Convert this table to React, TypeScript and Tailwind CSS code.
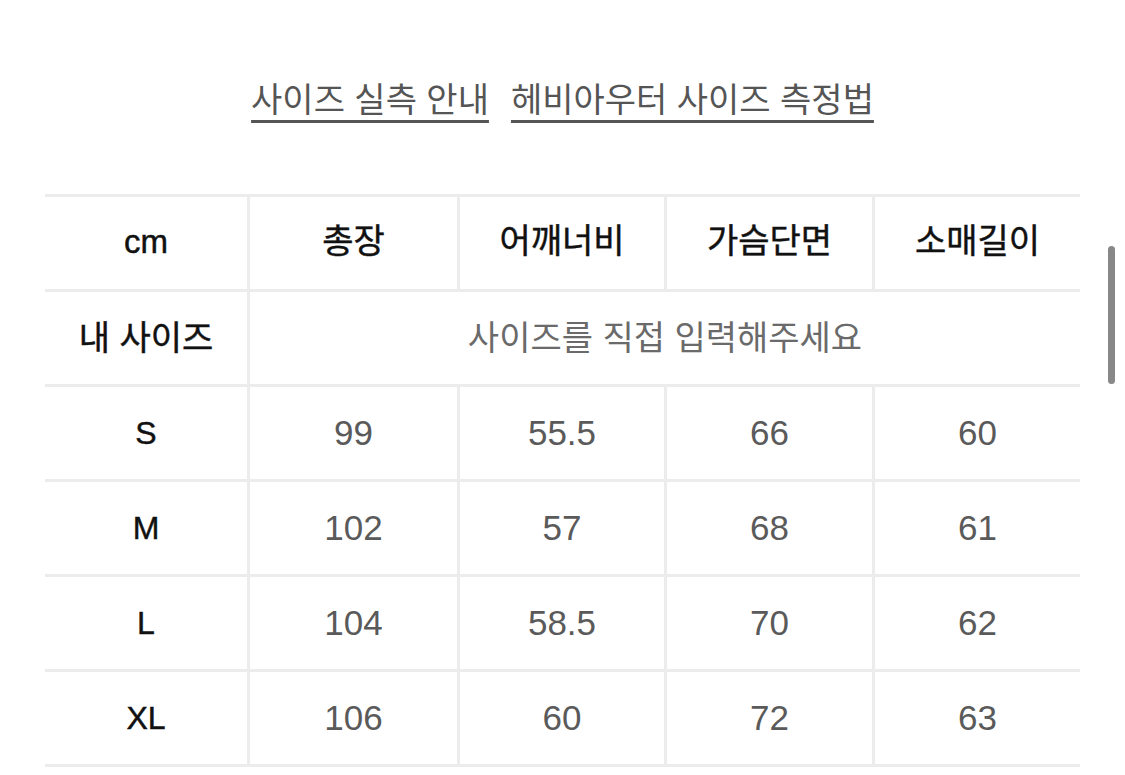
import React from "react";

const font = { fontFamily: '"Liberation Sans", "Noto Sans CJK KR", sans-serif' };

const headers = ["총장", "어깨너비", "가슴단면", "소매길이"];
const rows: [string, string[]][] = [
  ["S", ["99", "55.5", "66", "60"]],
  ["M", ["102", "57", "68", "61"]],
  ["L", ["104", "58.5", "70", "62"]],
  ["XL", ["106", "60", "72", "63"]],
];

function Cell({ children, first, className = "" }: { children: React.ReactNode; first?: boolean; className?: string }) {
  return (
    <div
      className={`h-[95px] flex items-center justify-center border-b-[3px] border-[#ececec] ${first ? "" : "border-l-[3px]"} ${className}`}
    >
      {children}
    </div>
  );
}

const head = "font-normal text-[#111] [-webkit-text-stroke:0.45px_#111]";

export default function App() {
  return (
    <div className="w-[1125px] h-[775px] bg-white overflow-hidden relative" style={font}>
      <div className="flex justify-center gap-[22px] pt-[80px] h-[194px]">
        <span className="text-[34px] leading-[40px] text-[#555] underline decoration-[3px] underline-offset-[8px] decoration-[#555]">
          사이즈 실측 안내
        </span>
        <span className="text-[34px] leading-[40px] text-[#555] underline decoration-[3px] underline-offset-[8px] decoration-[#555]">
          헤비아우터 사이즈 측정법
        </span>
      </div>
      <div className="ml-[45px] w-[1035px] border-t-[3px] border-[#ececec] grid grid-cols-[202px_210px_207px_208px_208px]">
        <Cell first className={`text-[33px] pb-[2px] ${head}`}>cm</Cell>
        {headers.map((h) => (
          <Cell key={h} className={`text-[34px] pb-[4px] ${head}`}>{h}</Cell>
        ))}
        <Cell first className={`text-[34px] ${head}`}>내 사이즈</Cell>
        <div className="col-span-4 h-[95px] flex items-center justify-center border-b-[3px] border-l-[3px] border-[#ececec] text-[34px] text-[#6a6a6a]">
          사이즈를 직접 입력해주세요
        </div>
        {rows.map(([s, vals]) => (
          <React.Fragment key={s}>
            <Cell first className={`text-[32px] ${head}`}>{s}</Cell>
            {vals.map((v, i) => (
              <Cell key={i} className="text-[35px] text-[#5a5a5a]">{v}</Cell>
            ))}
          </React.Fragment>
        ))}
      </div>
      <div className="absolute left-[1108px] top-[246px] w-[7px] h-[138px] rounded-full bg-[#888]" />
    </div>
  );
}
